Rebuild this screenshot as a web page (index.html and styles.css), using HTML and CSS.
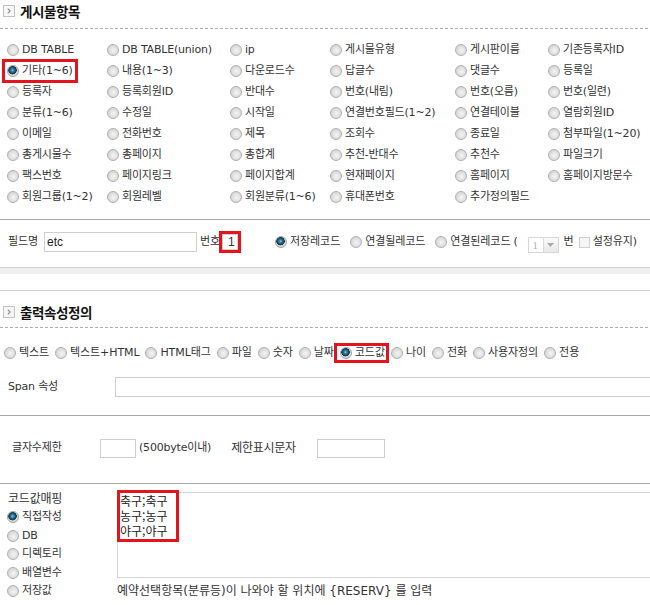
FILE: index.html
```html
<!DOCTYPE html>
<html lang="ko">
<head>
<meta charset="utf-8">
<title>게시물항목</title>
<link rel="stylesheet" href="styles.css">
</head>
<body>
<div class="page">
  <div class="sec-head">
    <span class="sec-icon"><svg width="12" height="12" viewBox="0 0 12 12"><rect x="0.5" y="0.5" width="11" height="11" fill="#f7f7f7" stroke="#c2c2c2"/><path d="M4.8 3.6 L7.2 6 L4.8 8.4" fill="none" stroke="#8a8a8a" stroke-width="1.1"/></svg></span>
    <h2 class="sec-title">게시물항목</h2>
  </div>
  <div class="dash"></div>

  <div class="grid">
    <span class="opt"><span class="radio"></span>DB TABLE</span>
    <span class="opt"><span class="radio"></span>DB TABLE(union)</span>
    <span class="opt"><span class="radio"></span>ip</span>
    <span class="opt"><span class="radio"></span>게시물유형</span>
    <span class="opt"><span class="radio"></span>게시판이름</span>
    <span class="opt"><span class="radio"></span>기존등록자ID</span>

    <span class="opt mark"><span class="radio on"></span>기타(1~6)</span>
    <span class="opt"><span class="radio"></span>내용(1~3)</span>
    <span class="opt"><span class="radio"></span>다운로드수</span>
    <span class="opt"><span class="radio"></span>답글수</span>
    <span class="opt"><span class="radio"></span>댓글수</span>
    <span class="opt"><span class="radio"></span>등록일</span>

    <span class="opt"><span class="radio"></span>등록자</span>
    <span class="opt"><span class="radio"></span>등록회원ID</span>
    <span class="opt"><span class="radio"></span>반대수</span>
    <span class="opt"><span class="radio"></span>번호(내림)</span>
    <span class="opt"><span class="radio"></span>번호(오름)</span>
    <span class="opt"><span class="radio"></span>번호(일련)</span>

    <span class="opt"><span class="radio"></span>분류(1~6)</span>
    <span class="opt"><span class="radio"></span>수정일</span>
    <span class="opt"><span class="radio"></span>시작일</span>
    <span class="opt"><span class="radio"></span>연결번호필드(1~2)</span>
    <span class="opt"><span class="radio"></span>연결테이블</span>
    <span class="opt"><span class="radio"></span>열람회원ID</span>

    <span class="opt"><span class="radio"></span>이메일</span>
    <span class="opt"><span class="radio"></span>전화번호</span>
    <span class="opt"><span class="radio"></span>제목</span>
    <span class="opt"><span class="radio"></span>조회수</span>
    <span class="opt"><span class="radio"></span>종료일</span>
    <span class="opt"><span class="radio"></span>첨부파일(1~20)</span>

    <span class="opt"><span class="radio"></span>총게시물수</span>
    <span class="opt"><span class="radio"></span>총페이지</span>
    <span class="opt"><span class="radio"></span>총합계</span>
    <span class="opt"><span class="radio"></span>추천-반대수</span>
    <span class="opt"><span class="radio"></span>추천수</span>
    <span class="opt"><span class="radio"></span>파일크기</span>

    <span class="opt"><span class="radio"></span>팩스번호</span>
    <span class="opt"><span class="radio"></span>페이지링크</span>
    <span class="opt"><span class="radio"></span>페이지합계</span>
    <span class="opt"><span class="radio"></span>현재페이지</span>
    <span class="opt"><span class="radio"></span>홈페이지</span>
    <span class="opt"><span class="radio"></span>홈페이지방문수</span>

    <span class="opt"><span class="radio"></span>회원그룹(1~2)</span>
    <span class="opt"><span class="radio"></span>회원레벨</span>
    <span class="opt"><span class="radio"></span>회원분류(1~6)</span>
    <span class="opt"><span class="radio"></span>휴대폰번호</span>
    <span class="opt"><span class="radio"></span>추가정의필드</span>
  </div>

  <div class="rule rule-dark"></div>

  <div class="field-block">
    <div class="field-row">
      <span class="fr-label">필드명</span>
      <input class="inp inp-name" type="text" value="etc">
      <span class="fr-no">번호</span>
      <input class="inp inp-num" type="text" value="1">
      <span class="radio on fr-r1"></span><span class="fr-t">저장레코드</span>
      <span class="radio fr-r"></span><span class="fr-t">연결될레코드</span>
      <span class="radio fr-r"></span><span class="fr-t">연결된레코드</span>
      <span class="fr-paren">(</span>
      <span class="sel"><span class="sel-val">1</span><span class="sel-btn"><svg width="7" height="4" viewBox="0 0 7 4"><path d="M0 0H7L3.5 4Z" fill="#a8a8a8"/></svg></span></span>
      <span class="fr-beon">번</span>
      <span class="chk"></span>
      <span class="fr-keep">설정유지)</span>
    </div>
  </div>

  <div class="rule rule-light"></div>
  <div class="band"></div>
  <div class="spacer"></div>
  <div class="rule rule-light"></div>

  <div class="sec-head sec-head-2">
    <span class="sec-icon"><svg width="12" height="12" viewBox="0 0 12 12"><rect x="0.5" y="0.5" width="11" height="11" fill="#f7f7f7" stroke="#c2c2c2"/><path d="M4.8 3.6 L7.2 6 L4.8 8.4" fill="none" stroke="#8a8a8a" stroke-width="1.1"/></svg></span>
    <h2 class="sec-title">출력속성정의</h2>
  </div>
  <div class="dash"></div>

  <div class="types-block">
    <div class="types">
      <span class="opt"><span class="radio"></span>텍스트</span>
      <span class="opt"><span class="radio"></span>텍스트+HTML</span>
      <span class="opt"><span class="radio"></span>HTML태그</span>
      <span class="opt"><span class="radio"></span>파일</span>
      <span class="opt"><span class="radio"></span>숫자</span>
      <span class="opt"><span class="radio"></span>날짜</span>
      <span class="opt mark-tight"><span class="radio on"></span>코드값</span>
      <span class="opt"><span class="radio"></span>나이</span>
      <span class="opt"><span class="radio"></span>전화</span>
      <span class="opt"><span class="radio"></span>사용자정의</span>
      <span class="opt"><span class="radio"></span>전용</span>
    </div>
    <div class="span-row">
      <span class="span-label">Span 속성</span>
      <input class="inp inp-wide" type="text" value="">
    </div>
  </div>

  <div class="rule rule-dark"></div>

  <div class="limit-block">
    <span class="lim-label">글자수제한</span>
    <input class="inp inp-lim" type="text" value="">
    <span class="lim-note">(500byte이내)</span>
    <span class="lim-label2">제한표시문자</span>
    <input class="inp inp-lim2" type="text" value="">
  </div>

  <div class="rule rule-dark"></div>

  <div class="mapping">
    <div class="map-left">
      <div class="map-label">코드값매핑</div>
      <span class="opt map-opt"><span class="radio on"></span>직접작성</span>
      <span class="opt map-opt"><span class="radio"></span>DB</span>
      <span class="opt map-opt"><span class="radio"></span>디렉토리</span>
      <span class="opt map-opt"><span class="radio"></span>배열변수</span>
      <span class="opt map-opt"><span class="radio"></span>저장값</span>
    </div>
    <div class="map-right">
      <div class="tarea"><div class="tx-mark"><div class="tx-line">축구;축구</div><div class="tx-line">농구;농구</div><div class="tx-line">야구;야구</div></div></div>
      <div class="map-note">예약선택항목(분류등)이 나와야 할 위치에 {RESERV} 를 입력</div>
    </div>
  </div>
</div>
</body>
</html>
```

FILE: styles.css
```css
* { box-sizing: border-box; }
html, body { margin: 0; padding: 0; background: #fff; }
body {
  font-family: "DejaVu Sans", "Noto Sans CJK KR", sans-serif;
  font-size: 11px;
  line-height: 14px;
  color: #333;
  letter-spacing: -0.2px;
}
.page { width: 650px; overflow: hidden; }

/* section headers */
.sec-head { display: flex; align-items: center; gap: 5px; height: 22px; padding-left: 3px; margin-bottom: 6px; }
.sec-head-2 { margin-top: 10px; margin-bottom: 4px; }
.sec-icon { display: flex; width: 12px; height: 12px; margin-top: -1px; }
.sec-title { margin: 0; font: bold 13.5px/22px "Noto Sans CJK KR", sans-serif; color: #111; letter-spacing: -0.4px; }
.dash { height: 1px; background: repeating-linear-gradient(to right, #b0b0b0 0 3px, transparent 3px 5px); }

/* rules */
.rule { height: 1px; }
.rule-dark { background: #a8a8a8; }
.rule-light { background: #d2d2d2; }
.band { height: 6px; background: #efefef; }
.spacer { height: 16px; }

/* radio */
.radio {
  flex: none;
  width: 12px; height: 12px;
  border-radius: 50%;
  border: 1px solid #b0b0b0;
  background: radial-gradient(circle at 55% 55%, #f4f4f4 0, #e4e4e4 40%, #c8c8c8 100%);
}
.radio.on {
  background: radial-gradient(circle at 45% 42%, #9cc8dc 0, #3a7c9c 18%, #124562 42%, #0d3550 50%, #dcdcdc 56%, #c4c4c4 100%);
  border-color: #a4a4a4;
}

/* option items */
.opt { display: flex; align-items: center; gap: 3px; height: 14px; white-space: nowrap; }

.grid {
  display: grid;
  grid-template-columns: 100px 123px 100px 125px 93px 1fr;
  grid-auto-rows: 21px;
  padding: 10px 0 12px 7px;
}
.grid .opt { align-self: center; justify-self: start; }

.mark { outline: 3px solid #e3141b; outline-offset: 2px; }
.mark-tight { outline: 3px solid #e3141b; outline-offset: 0; padding: 0 1px 0 3px; margin-left: -3px; margin-right: -1px; height: 14px; }

/* inputs */
.inp {
  font: 12px/16px "Liberation Sans", "Noto Sans CJK KR", sans-serif;
  color: #222;
  border: 1px solid #cfcfcf;
  background: #fff;
  padding: 0 2px;
  margin: 0;
  outline: none;
  flex: none;
}

/* field row */
.field-block { padding: 10px 0 13px 8px; }
.field-row { display: flex; align-items: center; height: 24px; letter-spacing: -0.1px; }
.fr-label { width: 36px; flex: none; }
.inp-name { width: 153px; height: 20px; }
.fr-no { margin-left: 3px; }
.inp-num { width: 16px; height: 16px; margin-left: 2px; padding: 0 0 0 5px; font-weight: normal; color: #333; outline: 3px solid #e3141b; outline-offset: 0; }
.fr-r1 { margin-left: 37px; }
.fr-r { margin-left: 10px; }
.fr-t { margin-left: 3px; }
.fr-paren { margin-left: 3px; }
.sel { display: flex; width: 31px; height: 16px; border: 1px solid #d6d6d6; margin-left: 10px; margin-top: 6px; background: #fff; flex: none; }
.sel-val { flex: 1; color: #b0b0b0; font: 11px/14px "Liberation Serif", serif; padding-left: 4px; }
.sel-btn { width: 15px; border-left: 1px solid #dcdcdc; background: linear-gradient(#fbfbfb, #e8e8e8); display: flex; align-items: center; justify-content: center; }
.fr-beon { margin-left: 5px; }
.chk { width: 11px; height: 11px; border: 1px solid #cfcfcf; background: #f6f6f6; margin-left: 5px; flex: none; }
.fr-keep { margin-left: 3px; }

/* types */
.types-block { padding: 13px 0 16px 0; }
.types { display: flex; align-items: center; gap: 6px; height: 24px; padding-left: 4px; letter-spacing: -0.1px; }
.span-row { display: flex; align-items: center; height: 24px; margin-top: 10px; padding-left: 8px; }
.span-label { width: 107px; flex: none; }
.inp-wide { flex: 1; height: 20px; margin-right: -8px; }

/* limit row */
.limit-block { display: flex; align-items: center; height: 24px; box-sizing: content-box; padding: 20px 0 23px 12px; }
.lim-label { width: 88px; flex: none; }
.inp-lim { width: 36px; height: 19px; }
.lim-note { margin-left: 3px; }
.lim-label2 { margin-left: 20px; font-size: 12px; letter-spacing: -0.3px; }
.inp-lim2 { width: 68px; height: 19px; margin-left: 21px; }

/* mapping */
.mapping { display: flex; padding-top: 6px; }
.map-left { width: 117px; flex: none; display: flex; flex-direction: column; padding-left: 7px; }
.map-label { height: 18px; line-height: 18px; font-size: 12px; padding-left: 1px; }
.map-opt { height: 18.5px; }
.map-right { flex: 1; display: flex; flex-direction: column; margin-right: -8px; }
.tarea { height: 86px; margin-top: 2px; border: 1px solid #d4d4d4; padding: 0 0 0 2px; font: 12px/15px "Noto Sans CJK KR", sans-serif; color: #222; letter-spacing: 0; }
.tx-mark { width: 56px; height: 46px; outline: 3px solid #e3141b; outline-offset: 0; white-space: nowrap; }
.tx-line { height: 15px; line-height: 15px; }
.map-note { height: 18px; line-height: 18px; margin-top: 4px; font-size: 12px; letter-spacing: 0; }
```
